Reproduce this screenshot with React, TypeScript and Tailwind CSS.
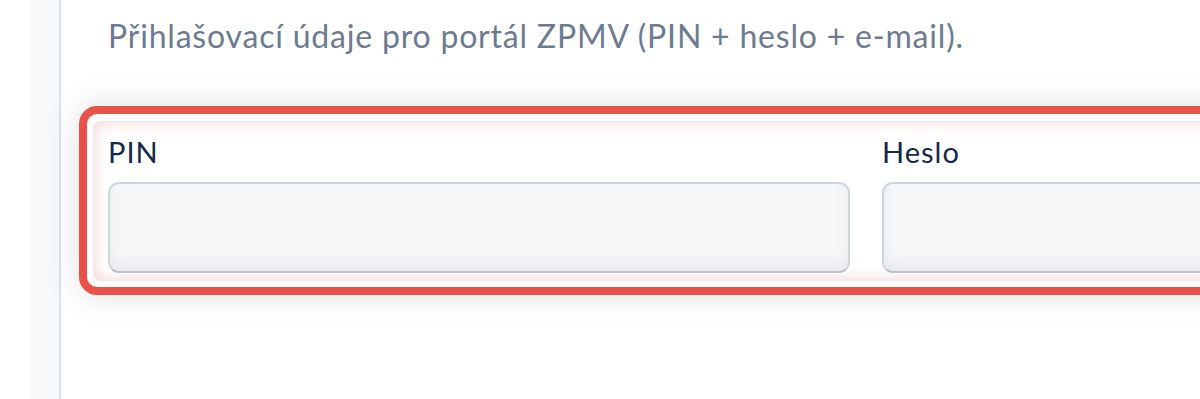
export default function App() {
    const fields = ["PIN", "Heslo"];

    return (
        <div className="flex h-[399px] w-[1200px] overflow-hidden bg-white font-['Lato',sans-serif]">
            <div className="w-[30px] shrink-0 bg-white" />
            <div className="w-[31px] shrink-0 border-r-2 border-[#d6e7eb] bg-[#f6f8fa]" />

            <main className="flex min-w-0 flex-1 flex-col">
                <p className="whitespace-nowrap pl-[47px] pt-[17px] text-[32px] leading-[1.2] tracking-[0.8px] text-[#6c7a93]">
                    Přihlašovací údaje pro portál ZPMV (PIN + heslo + e-mail).
                </p>

                <section className="ml-[18px] mt-[51px] w-[1580px] shrink-0 rounded-[18px] border-[8px] border-[#e8524a] bg-white p-[6px] pt-[7px] shadow-[0_0_34px_rgba(0,0,0,0.13)]">
                    <div className="grid grid-cols-[742px_742px] gap-x-[32px] rounded-[8px] px-[15px] pb-[8px] pt-[14px] shadow-[inset_0_0_16px_rgba(214,140,140,0.42)]">
                        {fields.map((label) => (
                            <div key={label} className="flex flex-col gap-[12px]">
                                <label className="text-[29px] leading-[1.2] tracking-[1px] text-[#14294c]">{label}</label>
                                <div className="h-[91px] rounded-[11px] border-2 border-[#cbd7dd] border-b-[#bcc2c7] bg-[#f5f7f9] shadow-[inset_0_-10px_14px_rgba(0,0,0,0.05)]" />
                            </div>
                        ))}
                    </div>
                </section>
            </main>
        </div>
    );
}
